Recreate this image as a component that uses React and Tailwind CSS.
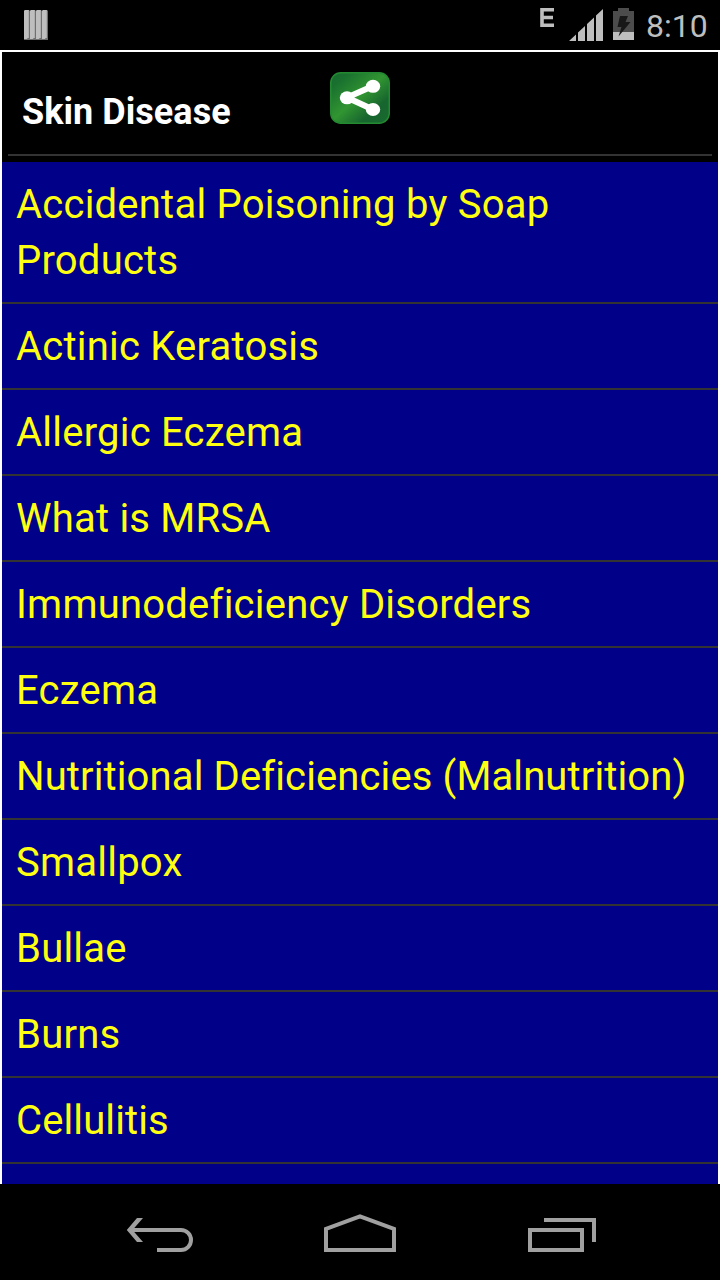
import React from 'react';

const diseases = [
  { name: 'Accidental Poisoning by Soap Products' },
  { name: 'Actinic Keratosis' },
  { name: 'Allergic Eczema' },
  { name: 'What is MRSA' },
  { name: 'Immunodeficiency Disorders' },
  { name: 'Eczema' },
  { name: 'Nutritional Deficiencies (Malnutrition)', tight: true },
  { name: 'Smallpox' },
  { name: 'Bullae' },
  { name: 'Burns' },
  { name: 'Cellulitis', tight: true },
];

function StripesIcon() {
  return (
    <svg width="24" height="30" viewBox="0 0 24 30">
      {[0, 6, 12, 18].map((x) => (
        <g key={x}>
          <path d={`M${x} 1l1-1h4l1 1v29h-6z`} fill="#6f6f6f" />
          <path d={`M${x} 1l1-1h3.8v28h-1l-1 1H${x}z`} fill="#bebebe" />
        </g>
      ))}
    </svg>
  );
}

function SignalIcon() {
  return (
    <svg width="34" height="32" viewBox="0 0 34 32" fill="#bebebe">
      <path d="M0 32l7-6.5V32zM9 23.5l7-6.5v15H9zM18 15l7-6.5V32h-7zM27 6.5l7-6.5v32h-7z" />
    </svg>
  );
}

function BatteryIcon() {
  return (
    <svg width="21" height="32" viewBox="0 0 21 32">
      <path d="M5 0h11v3h5v29H0V3h5z" fill="#4c4c4c" />
      <path d="M0 24h21v8H0z" fill="#bebebe" />
      <path d="M7 8h8l-2.5 6H17.500L5.500 28.500L8.500 19H4.500z" fill="#181818" />
    </svg>
  );
}

function ShareIcon() {
  return (
    <svg width="60" height="52" viewBox="0 0 60 52">
      <defs>
        <linearGradient id="shareBg" x1="0" y1="0" x2="1" y2="1">
          <stop offset="0" stopColor="#176b2e" />
          <stop offset="0.15" stopColor="#19702f" />
          <stop offset="0.48" stopColor="#319531" />
          <stop offset="0.75" stopColor="#17652f" />
          <stop offset="1" stopColor="#186b30" />
        </linearGradient>
      </defs>
      <rect x="0.75" y="0.75" width="58.5" height="50.5" rx="10" fill="url(#shareBg)" stroke="#238a31" strokeWidth="1.5" />
      <path d="M43 14L17 25.5L43 37.5" fill="none" stroke="#fff" strokeWidth="6" />
      <g fill="#fff">
        <ellipse cx="43" cy="14.3" rx="7.2" ry="6.5" />
        <ellipse cx="17" cy="25.8" rx="7.2" ry="6.5" />
        <ellipse cx="43" cy="37.5" rx="7.2" ry="6.5" />
      </g>
    </svg>
  );
}

function StatusBar() {
  return (
    <div className="flex h-[50px] shrink-0 items-start justify-between pl-6 pr-3 text-[#bebebe]">
      <div className="pt-2.5">
        <StripesIcon />
      </div>
      <div className="flex items-start">
        <svg className="mt-2 mr-[15px]" width="14" height="19" viewBox="0 0 14 19">
          <path d="M14 1.8H2v15.4h12M2 9.5h11" fill="none" stroke="#bebebe" strokeWidth="3.6" />
        </svg>
        <div className="mt-[9px] mr-2.5">
          <SignalIcon />
        </div>
        <div className="mt-2 mr-3">
          <BatteryIcon />
        </div>
        <span className="mt-[6px] w-[62px] text-[32px] leading-[40px] whitespace-nowrap">8:10</span>
      </div>
    </div>
  );
}

function NavBar() {
  return (
    <div className="flex h-24 shrink-0 items-start bg-black">
      <button className="mt-[30px] ml-[126px]">
        <svg className="block" width="68" height="38" viewBox="0 0 68 38" fill="none" stroke="#a0a0a0" strokeWidth="4">
          <path d="M4 16h51a10 10 0 0 1 0 20H31" />
          <path d="M11 4h6L6.5 16L17 28h-6L.8 16z" fill="#a0a0a0" stroke="none" />
        </svg>
      </button>
      <button className="mt-[30px] ml-[130px]">
        <svg className="block" width="72" height="38" viewBox="0 0 72 38" fill="none" stroke="#a0a0a0" strokeWidth="4">
          <path d="M2 36V14.8L36 2.4L70 14.8V36z" />
        </svg>
      </button>
      <button className="mt-[34px] ml-[132px]">
        <svg className="block" width="68" height="34" viewBox="0 0 68 34" fill="none" stroke="#a0a0a0" strokeWidth="4">
          <path d="M2 12h52v20H2z" />
          <path d="M16 2h50v22" />
        </svg>
      </button>
    </div>
  );
}

function App() {
  return (
    <div className="flex h-[1280px] w-[720px] flex-col overflow-hidden bg-black font-[Roboto,sans-serif]">
      <StatusBar />

      <div className="flex min-h-0 flex-1 flex-col border-2 border-b-0 border-white">
        {/* Header */}
        <div className="h-[110px] shrink-0 px-1.5">
          <div className="flex h-[104px] items-start border-b-2 border-[#333333] pl-3.5">
            <h1 className="mt-[39px] w-[308px] text-[36px] leading-[42px] font-bold tracking-[0.05px] text-white">
              Skin Disease
            </h1>
            <button className="mt-5">
              <ShareIcon />
            </button>
          </div>
        </div>

        {/* Disease list */}
        <ul className="min-h-0 flex-1 overflow-hidden bg-[#000088]">
          {diseases.map(({ name, tight }) => (
            <li
              key={name}
              className={`border-b-2 border-[#333333] px-3.5 pt-[15px] pb-[13px] text-[40px] leading-[56px] text-[#ffff11] ${
                tight ? 'tracking-[0.12px]' : 'tracking-[0.22px]'
              }`}
            >
              {name}
            </li>
          ))}
        </ul>
      </div>

      <NavBar />
    </div>
  );
}

export default App;
